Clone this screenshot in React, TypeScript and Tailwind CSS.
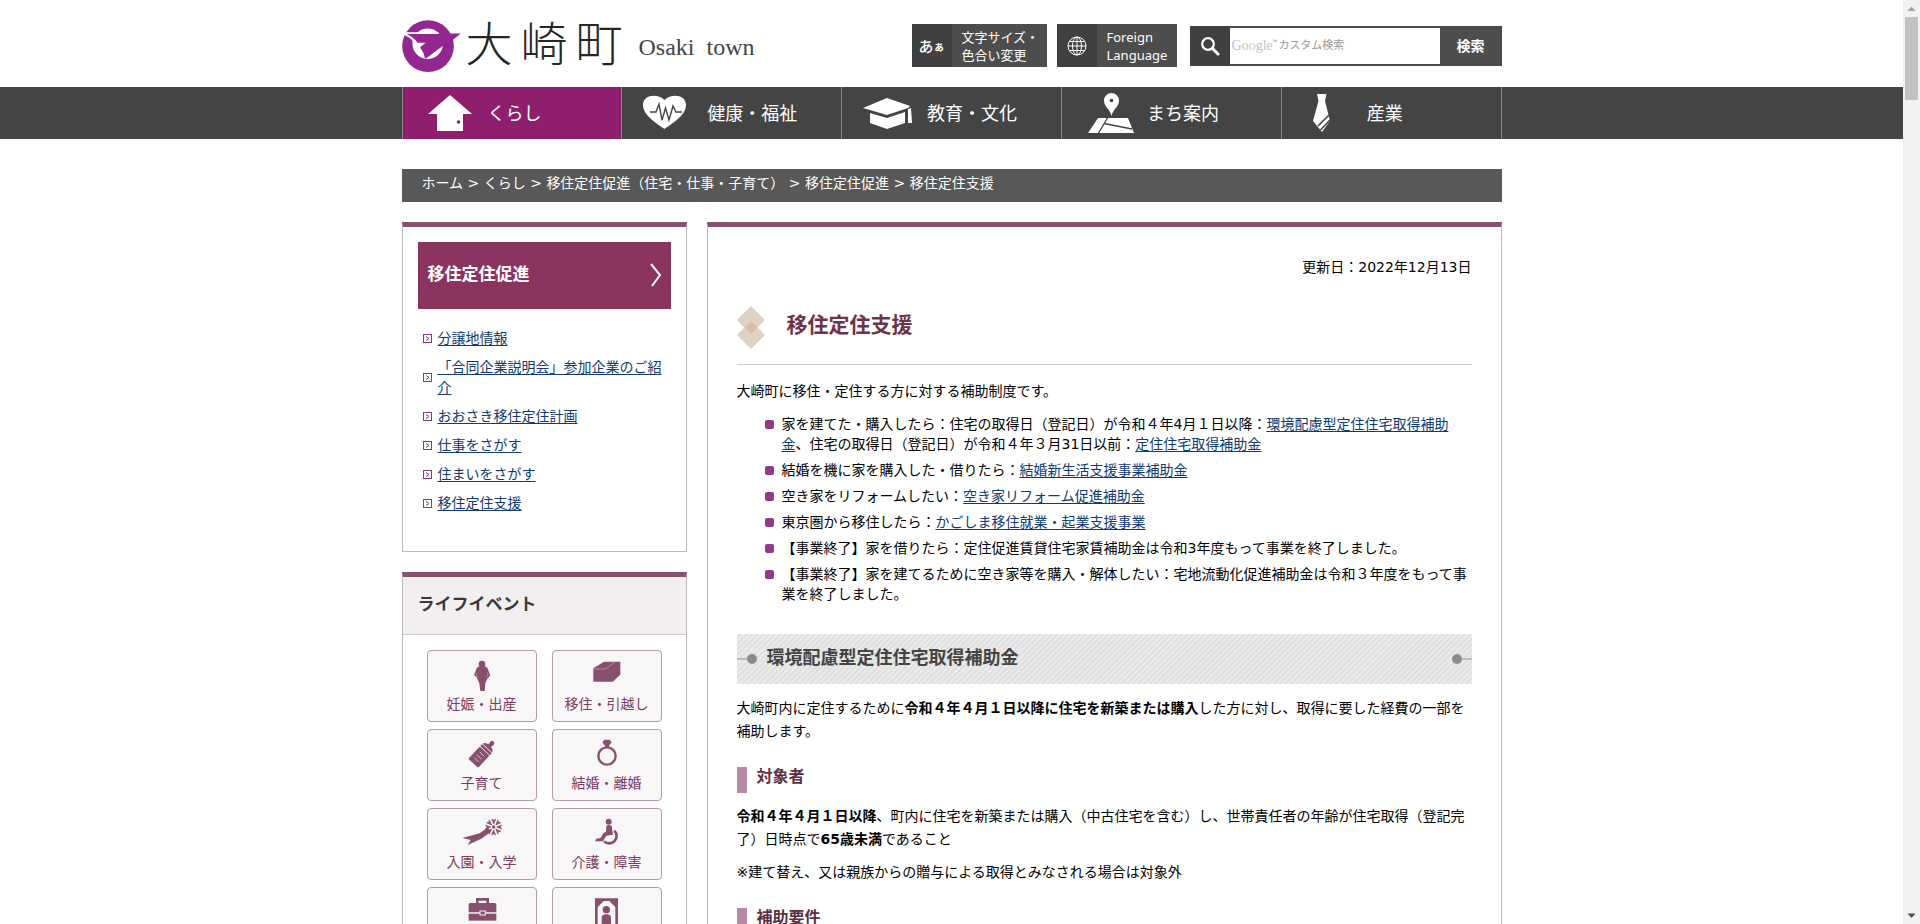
import React from 'react';

const NAV_ITEMS = [
  { label: 'くらし', icon: <HouseIcon />, active: true },
  { label: '健康・福祉', icon: <HeartIcon />, active: false },
  { label: '教育・文化', icon: <CapIcon />, active: false },
  { label: 'まち案内', icon: <MapIcon />, active: false },
  { label: '産業', icon: <TieIcon />, active: false },
];

const BREADCRUMBS = ['ホーム', 'くらし', '移住定住促進（住宅・仕事・子育て）', '移住定住促進'];

const SIDE_LINKS = [
  '分譲地情報',
  '「合同企業説明会」参加企業のご紹介',
  'おおさき移住定住計画',
  '仕事をさがす',
  '住まいをさがす',
  '移住定住支援',
];

const LIFE_EVENTS = [
  { label: '妊娠・出産', icon: <PregnancyIcon /> },
  { label: '移住・引越し', icon: <BoxIcon /> },
  { label: '子育て', icon: <BottleIcon /> },
  { label: '結婚・離婚', icon: <RingIcon /> },
  { label: '入園・入学', icon: <BouquetIcon /> },
  { label: '介護・障害', icon: <WheelchairIcon /> },
  { label: '就職・退職', icon: <BriefcaseIcon /> },
  { label: 'おくやみ', icon: <PortraitIcon /> },
];

/* ---------- header icons ---------- */

function Emblem() {
  return (
    <svg viewBox="0 0 180 160" className="h-[53px] w-[60px]" aria-hidden="true">
      <circle cx="78" cy="79" r="78" fill="#92278f" />
      <circle cx="77" cy="72" r="46" fill="#fff" />
      <path d="M30 41 H177 L152 60 Q148 74 124 78 Q104 92 74 115 L69 116 Q66 98 54 82 L71 69 L46 69 Q36 53 20 46 Z" fill="#92278f" />
      <path d="M0 37 L8 37 H110 V42 H14 Q32 50 42 64 L34 66 Q22 50 4 45 Z" fill="#fff" />
    </svg>
  );
}

function GlobeIcon() {
  return (
    <svg viewBox="0 0 20 20" className="h-5 w-5" fill="none" stroke="#fff" strokeWidth="1" aria-hidden="true">
      <circle cx="10" cy="10" r="9" />
      <ellipse cx="10" cy="10" rx="4.5" ry="9" />
      <path d="M10 1 V19 M1 10 H19 M2.5 5.5 H17.5 M2.5 14.5 H17.5" />
    </svg>
  );
}

function SearchIcon() {
  return (
    <svg viewBox="0 0 20 20" className="h-5 w-5" fill="none" stroke="#fff" aria-hidden="true">
      <circle cx="8" cy="8" r="5.8" strokeWidth="2.2" />
      <path d="M12.500 12.500 L18 18" strokeWidth="3" strokeLinecap="round" />
    </svg>
  );
}

/* ---------- navigation icons ---------- */

function NavIcon({ children }: { children: React.ReactNode }) {
  return (
    <svg viewBox="0 0 85 52" className="h-[52px] w-[85px] shrink-0" fill="#fff" aria-hidden="true">
      {children}
    </svg>
  );
}

function HouseIcon() {
  return (
    <NavIcon>
      <path d="M47 8 L69 27 H60 V44 H34 V27 H25 Z" />
      <circle cx="55.500" cy="35" r="1.8" fill="#8f1f6e" />
    </NavIcon>
  );
}

function HeartIcon() {
  return (
    <NavIcon>
      <path d="M42.500 42 C34 36 21 28 21 18 C21 8 35 6 42.500 13 C50 6 64 8 64 18 C64 28 51 36 42.500 42 Z" />
      <path d="M28 25 H34 L37 17 L40 33 L43.500 21 L47 33 L51 19 L54 25 H60" fill="none" stroke="#444" strokeWidth="1.400" />
    </NavIcon>
  );
}

function CapIcon() {
  return (
    <NavIcon>
      <path d="M45 11 L68 19 L66 21 L45 28 L21 21 Z" />
      <path d="M28 26 L45 31 L63 25 V36 L45 42 L28 36 Z" />
      <path d="M66 22 L69 21 L70 36 H66 Z" />
    </NavIcon>
  );
}

function MapIcon() {
  return (
    <NavIcon>
      <path d="M49.500 29 C48 22 42 20 42 13.500 A7.500 7.500 0 0 1 57 13.500 C57 20 51 22 49.500 29 Z" />
      <circle cx="49.500" cy="13.500" r="1.800" fill="#444" />
      <path d="M36 31 H66 L72 46 H26 Z" />
      <path d="M46 30 L36 47 M42 36.500 L70 42" stroke="#444" strokeWidth="1.400" fill="none" />
    </NavIcon>
  );
}

function TieIcon() {
  return (
    <NavIcon>
      <path d="M35 7 H44.500 L43 14 L48 34 L40 45 L31 34 L36.500 14 Z" />
      <path d="M47 28 L36 39 M48 33 L38.500 43" stroke="#444" strokeWidth="1.600" fill="none" />
    </NavIcon>
  );
}

/* ---------- life event icons ---------- */

function EventIcon({ children }: { children: React.ReactNode }) {
  return (
    <svg viewBox="0 0 120 96" className="h-8 w-10" fill="#87506f" aria-hidden="true">
      {children}
    </svg>
  );
}

function PregnancyIcon() {
  return (
    <EventIcon>
      <circle cx="60" cy="12" r="10" />
      <path d="M52 19 H69 Q78 22 80 34 L85 46 L76 56 L70 70 L68 93 H55 L52 70 L44 52 L36 46 L42 30 Q44 21 52 19 Z" />
      <path d="M45 38 L43 46 L49 52 M77 38 L78 46 L73 52" stroke="#f8f6f7" strokeWidth="1" fill="none" />
    </EventIcon>
  );
}

function BoxIcon() {
  return (
    <EventIcon>
      <path d="M19 25 L51 5 H100 V44 L77 65 H19 Z" />
      <path d="M19 27 H56 L84 6" stroke="#d9c6d1" strokeWidth="1.500" fill="none" />
    </EventIcon>
  );
}

function BottleIcon() {
  return (
    <EventIcon>
      <g transform="translate(57 48) rotate(43)">
        <circle cx="0" cy="-48" r="7" />
        <path d="M-6 -44 H6 V-38 Q18 -36 19 -28 H-19 Q-18 -36 -6 -38 Z" />
        <rect x="-20" y="-26" width="40" height="8" rx="2" />
        <rect x="-20" y="-16" width="40" height="50" rx="4" />
        <path d="M-9 -4 H9 M-9 8 H9 M-9 20 H9" stroke="#f8f6f7" strokeWidth="2" />
      </g>
    </EventIcon>
  );
}

function RingIcon() {
  return (
    <EventIcon>
      <circle cx="60" cy="51" r="26" fill="none" stroke="#87506f" strokeWidth="7" />
      <path d="M46 10 L52 2 H68 L74 10 L66 20 V27 H54 V20 Z" />
    </EventIcon>
  );
}

function BouquetIcon() {
  return (
    <EventIcon>
      <path d="M1 60 L53 46 L78 28 L86 42 L58 62 L17 81 L26 66 Z" />
      {[0, 45, 90, 135, 180, 225, 270, 315].map((angle) => (
        <path key={angle} d="M0 -9 L6 -24 L0 -20 L-6 -24 Z" transform={`translate(95 27) rotate(${angle})`} stroke="#87506f" strokeWidth="2" />
      ))}
      <circle cx="95" cy="27" r="5" />
    </EventIcon>
  );
}

function WheelchairIcon() {
  return (
    <EventIcon>
      <circle cx="65" cy="11" r="9" />
      <path d="M58 23 Q66 18 74 24 L78 50 L58 53 L48 70 H24 L28 62 L41 60 L50 44 L57 42 Z" />
      <path d="M82 38 A22 22 0 1 1 51 70" fill="none" stroke="#87506f" strokeWidth="8" />
    </EventIcon>
  );
}

function BriefcaseIcon() {
  return (
    <EventIcon>
      <path d="M46 20 V7 H77 V20" fill="none" stroke="#87506f" strokeWidth="8" />
      <path d="M24 18 H98 Q103 18 103 23 V46 H20 V23 Q20 18 24 18 Z" />
      <path d="M20 50 H103 V71 H20 Z" />
      <rect x="54" y="42" width="16" height="12" stroke="#f8f6f7" strokeWidth="3" />
    </EventIcon>
  );
}

function PortraitIcon() {
  return (
    <EventIcon>
      <path d="M24 4 H93 V90 H24 Z M32 12 V82 H85 V12 Z" fillRule="evenodd" />
      <path d="M30 8 H54 L30 32 Z M87 8 H63 L87 32 Z" />
      <circle cx="58" cy="38" r="11" />
      <path d="M44 86 V60 Q46 52 58 52 Q70 52 72 60 V86 Z" />
    </EventIcon>
  );
}

/* ---------- page parts ---------- */

function Header() {
  return (
    <header className="mx-auto flex h-[87px] w-full max-w-[1100px] items-center justify-between pt-1.5">
      <a href="#" className="flex items-center text-[#262626]">
        <Emblem />
        <span className="ml-1 flex gap-2 pb-1 text-[47px] leading-[52px] font-extralight">
          <span>大</span>
          <span>崎</span>
          <span>町</span>
        </span>
        <span className="ml-4 flex gap-3 font-['Liberation_Serif',serif] text-[24px] leading-8 text-[#444]">
          <span>Osaki</span>
          <span>town</span>
        </span>
      </a>

      <div className="flex items-center pb-0.5 font-['Noto_Sans','Noto_Sans_CJK_JP',sans-serif] text-white">
        <button type="button" className="flex h-[43px] w-[135px] bg-[#4d4d4d] text-left text-[13px] leading-[18px]">
          <span className="flex h-full w-10 items-center justify-center bg-[#404040]">
            <span className="text-[15px] font-medium">あ</span>
            <span className="pt-0.5 text-[11px] font-bold">ぁ</span>
          </span>
          <span className="self-center pl-2.5">
            文字サイズ・
            <br />
            色合い変更
          </span>
        </button>
        <button type="button" className="ml-2.5 flex h-[43px] w-[120px] bg-[#4d4d4d] text-left text-[13px] leading-[18px]">
          <span className="flex h-full w-10 items-center justify-center bg-[#404040]">
            <GlobeIcon />
          </span>
          <span className="self-center pl-2.5">
            Foreign
            <br />
            Language
          </span>
        </button>
        <form className="ml-[13px] flex h-10 w-[312px] bg-[#4d4d4d]" onSubmit={(e) => e.preventDefault()}>
          <span className="flex w-10 items-center justify-center bg-[#404040]">
            <SearchIcon />
          </span>
          <div className="relative my-0.5 min-w-0 flex-1">
            <input id="site-search" type="text" className="h-full w-full bg-white px-1 text-[13px] text-black outline-none" />
            <label htmlFor="site-search" className="absolute inset-y-0 left-0.5 flex items-center text-[11px] text-[#999]">
              <span className="font-['Liberation_Serif',serif] text-[14px]">
                <span className="text-[#b9c0dd]">G</span>
                <span className="text-[#dcb8be]">o</span>
                <span className="text-[#d9cfae]">o</span>
                <span className="text-[#b9c0dd]">g</span>
                <span className="text-[#b5d0b8]">l</span>
                <span className="text-[#dcb8be]">e</span>
              </span>
              <span className="mr-px self-start pt-2.5 text-[6px]">™</span>
              カスタム検索
            </label>
          </div>
          <button type="submit" className="w-[62px] text-[14px] font-bold">
            検索
          </button>
        </form>
      </div>
    </header>
  );
}

function GlobalNav() {
  return (
    <nav className="bg-[#444]">
      <ul className="mx-auto grid max-w-[1100px] grid-cols-5 border-r border-[#8a8a8a]">
        {NAV_ITEMS.map((item) => (
          <li key={item.label} className="border-l border-[#8a8a8a]">
            <a
              href="#"
              className={`flex h-[52px] items-center text-[18px] text-white ${item.active ? 'bg-[#8f1f6e]' : ''}`}
            >
              {item.icon}
              {item.label}
            </a>
          </li>
        ))}
      </ul>
    </nav>
  );
}

function Breadcrumb() {
  return (
    <nav aria-label="パンくず" className="mt-[30px] bg-[#585858] px-5 pt-1 pb-2 leading-[21px] text-white">
      {BREADCRUMBS.map((label) => (
        <React.Fragment key={label}>
          <a href="#">{label}</a>
          {' > '}
        </React.Fragment>
      ))}
      移住定住支援
    </nav>
  );
}

function SideMenu() {
  return (
    <section className="border border-t-[5px] border-[#bbb] border-t-[#87506f] px-[15px] pt-[15px] pb-[38px]">
      <h2>
        <a href="#" className="flex h-[67px] items-center justify-between bg-[#8b335f] pr-2 pb-0.5 pl-2.5 text-[17px] font-bold text-white">
          移住定住促進
          <svg viewBox="0 0 14 24" className="h-6 w-3.5" fill="none" stroke="#fff" strokeWidth="2" aria-hidden="true">
            <path d="M2 1 L11 12 L3 23" />
          </svg>
        </a>
      </h2>
      <ul className="mt-[19px] space-y-[9px] px-[5px] leading-5">
        {SIDE_LINKS.map((label) => (
          <li key={label} className="flex items-center gap-1.5">
            <svg viewBox="0 0 9 9" className="h-[9px] w-[9px] shrink-0" fill="none" stroke="#8b3a80" aria-hidden="true">
              <rect x="0.5" y="0.5" width="8" height="8" />
              <path d="M3 2.500 L6 4.500 L3 6.500" />
            </svg>
            <TextLink>{label}</TextLink>
          </li>
        ))}
      </ul>
    </section>
  );
}

function LifeEvents() {
  return (
    <section className="mt-5 border border-t-[5px] border-[#bbb] border-t-[#87506f]">
      <h2 className="h-[58px] border-b border-[#ccc] bg-[#f3eff0] px-[15px] pt-[15px] text-[17px] leading-6 font-bold text-[#3a3a3a]">
        ライフイベント
      </h2>
      <ul className="grid grid-cols-2 gap-x-[15px] gap-y-[7px] px-6 py-[15px]">
        {LIFE_EVENTS.map((event) => (
          <li key={event.label}>
            <a
              href="#"
              className="flex h-[72px] flex-col items-center rounded border border-[#b59aa9] bg-[#f8f6f7] pt-[9px] leading-6 text-[#7b3a60]"
            >
              {event.icon}
              {event.label}
            </a>
          </li>
        ))}
      </ul>
    </section>
  );
}

function TextLink({ children }: { children: React.ReactNode }) {
  return (
    <a href="#" className="text-[#0f3a72] underline underline-offset-2">
      {children}
    </a>
  );
}

function Bullet({ children }: { children: React.ReactNode }) {
  return (
    <li className="flex gap-2">
      <span className="mt-1.5 h-[9px] w-[9px] shrink-0 rounded-[2px] bg-[#913b87]" />
      <span>{children}</span>
    </li>
  );
}

function SubHeading({ children }: { children: React.ReactNode }) {
  return (
    <h3 className="mt-6 mb-3 border-l-10 border-[#b58aa6] pb-1.5 pl-2.5 text-[16px] leading-5 font-bold text-[#5c3043]">
      {children}
    </h3>
  );
}

function Article() {
  return (
    <main className="min-w-0 flex-1 border border-t-[5px] border-[#bbb] border-t-[#87506f] px-[29px] pt-[30px] pb-10">
      <p className="text-right leading-5">更新日：2022年12月13日</p>

      <div className="mt-[29px] flex items-start gap-[22px] border-b border-[#ccc] pb-[15px]">
        <svg viewBox="0 0 28 43" className="h-[43px] w-7" fill="#e0d2c3" aria-hidden="true">
          <path d="M14 0 L28 14 L14 28 L0 14 Z" />
          <path d="M14 15 L28 29 L14 43 L0 29 Z" />
          <path d="M14 15 L20.500 21.500 L14 28 L7.500 21.500 Z" fill="#d2bfab" />
        </svg>
        <h1 className="pt-1 text-[21px] leading-[30px] font-bold text-[#6d3349]">移住定住支援</h1>
      </div>

      <p className="mt-4 leading-5">大崎町に移住・定住する方に対する補助制度です。</p>
      <ul className="mt-[13px] space-y-1.5 pl-7 leading-5">
        <Bullet>
          家を建てた・購入したら：住宅の取得日（登記日）が令和４年4月１日以降：
          <TextLink>環境配慮型定住住宅取得補助金</TextLink>、住宅の取得日（登記日）が令和４年３月31日以前：
          <TextLink>定住住宅取得補助金</TextLink>
        </Bullet>
        <Bullet>
          結婚を機に家を購入した・借りたら：<TextLink>結婚新生活支援事業補助金</TextLink>
        </Bullet>
        <Bullet>
          空き家をリフォームしたい：<TextLink>空き家リフォーム促進補助金</TextLink>
        </Bullet>
        <Bullet>
          東京圏から移住したら：<TextLink>かごしま移住就業・起業支援事業</TextLink>
        </Bullet>
        <Bullet>【事業終了】家を借りたら：定住促進賃貸住宅家賃補助金は令和3年度もって事業を終了しました。</Bullet>
        <Bullet>
          【事業終了】家を建てるために空き家等を購入・解体したい：宅地流動化促進補助金は令和３年度をもって事業を終了しました。
        </Bullet>
      </ul>

      <h2 className="mt-[30px] flex h-[50px] items-center bg-[repeating-linear-gradient(135deg,#eaeaea_0px,#eaeaea_2px,#e0e0e0_2px,#e0e0e0_4px)] text-[18px] font-bold text-[#444]">
        <span className="h-0.5 w-2.5 bg-[#bbb]" />
        <span className="h-2.5 w-2.5 rounded-full bg-[#8b8b8b]" />
        <span className="flex-1 pb-1 pl-2.5">環境配慮型定住住宅取得補助金</span>
        <span className="h-2.5 w-2.5 rounded-full bg-[#8b8b8b]" />
        <span className="h-0.5 w-2.5 bg-[#bbb]" />
      </h2>

      <p className="mt-[13px] leading-[23px]">
        大崎町内に定住するために<b>令和４年４月１日以降に住宅を新築または購入</b>した方に対し、取得に要した経費の一部を補助します。
      </p>

      <SubHeading>対象者</SubHeading>
      <p className="leading-[23px]">
        <b>令和４年４月１日以降</b>、町内に住宅を新築または購入（中古住宅を含む）し、世帯責任者の年齢が住宅取得（登記完了）日時点で<b>65歳未満</b>であること
      </p>
      <p className="mt-2.5 leading-[23px]">※建て替え、又は親族からの贈与による取得とみなされる場合は対象外</p>

      <SubHeading>補助要件</SubHeading>
    </main>
  );
}

function ScrollTrack() {
  return (
    <div className="flex w-[17px] shrink-0 flex-col items-center bg-[#f1f1f1]" aria-hidden="true">
      <svg viewBox="0 0 17 17" className="h-[17px] w-[17px]" fill="#a3a3a3">
        <path d="M4.500 11 L8.500 6.500 L12.500 11 Z" />
      </svg>
      <div className="h-[83px] w-[13px] bg-[#c1c1c1]" />
      <svg viewBox="0 0 17 17" className="mt-auto h-[17px] w-[17px]" fill="#505050">
        <path d="M4.500 6.500 L8.500 11 L12.500 6.500 Z" />
      </svg>
    </div>
  );
}

const App: React.FC = () => {
  return (
    <div className="flex h-screen overflow-hidden bg-white font-['DejaVu_Sans','Noto_Sans_CJK_JP',sans-serif] text-[14px] text-black">
      <div lang="ja" className="min-w-0 flex-1 overflow-hidden">
        <Header />
        <GlobalNav />
        <div className="mx-auto max-w-[1100px]">
          <Breadcrumb />
          <div className="mt-5 flex items-start gap-5">
            <aside className="w-[285px] shrink-0">
              <SideMenu />
              <LifeEvents />
            </aside>
            <Article />
          </div>
        </div>
      </div>
      <ScrollTrack />
    </div>
  );
};

export default App;
